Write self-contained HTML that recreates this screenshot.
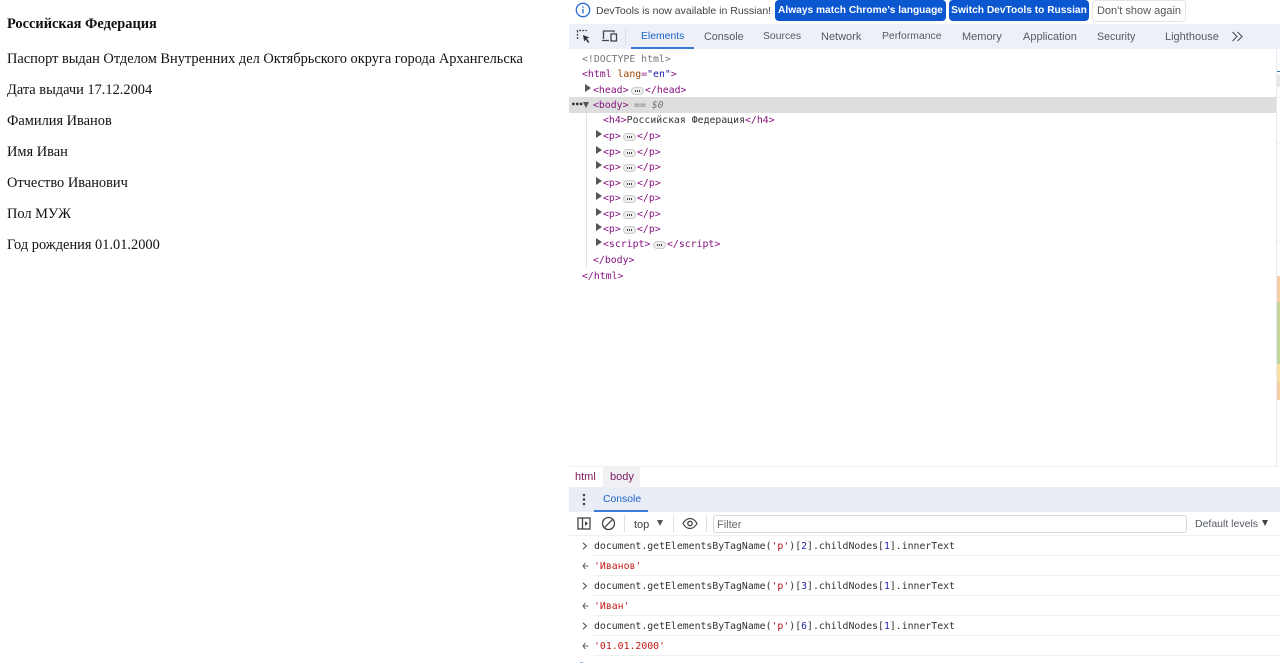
<!DOCTYPE html>
<html lang="ru"><head><meta charset="utf-8"><title>Паспорт</title>
<style>
html,body{margin:0;padding:0;background:#fff;width:1280px;height:664px;overflow:hidden}
#r{position:relative;width:1280px;height:664px;overflow:hidden}
#r>*{position:absolute}
.s{font-family:"Liberation Serif","Noto Serif CJK SC",serif;font-size:14.4px;line-height:18px;color:#111;white-space:nowrap;left:7px}
.u{font-family:"Liberation Sans","Noto Sans CJK SC",sans-serif;font-size:11px;line-height:14px;color:#555b63;white-space:nowrap}
.m{font-family:"DejaVu Sans Mono","Liberation Mono",monospace;font-size:9.83px;line-height:14px;color:#333;white-space:pre}
.t{color:#881280}.a{color:#994500}.v{color:#1a1aa6}.g{color:#777}
.b{background:#0b57d0;color:#fff;font-weight:bold;font-size:10.2px;border-radius:4px;height:21px;line-height:21px;top:0;text-align:center}
.e{width:13px;height:8px;border:1px solid #ccc;border-radius:4px;background:#eee;box-sizing:border-box}
.e:after{content:"";position:absolute;left:3px;top:2px;width:5px;height:1.5px;background:repeating-linear-gradient(90deg,#444 0 1.2px,transparent 1.2px 2px)}
.ar{width:0;height:0;border-top:4px solid transparent;border-bottom:4px solid transparent;border-left:6px solid #555}
.dn{width:0;height:0;border-left:3.5px solid transparent;border-right:3.5px solid transparent;border-top:6px solid #555}
.l{height:1px;background:#eef0f6}
</style></head><body><div id="r">
<div class="s" style="top:15px;font-weight:bold">Российская Федерация</div>
<div class="s" style="top:50px">Паспорт выдан Отделом Внутренних дел Октябрьского округа города Архангельска</div>
<div class="s" style="top:81px">Дата выдачи 17.12.2004</div>
<div class="s" style="top:112px">Фамилия Иванов</div>
<div class="s" style="top:143px">Имя Иван</div>
<div class="s" style="top:174px">Отчество Иванович</div>
<div class="s" style="top:205px">Пол МУЖ</div>
<div class="s" style="top:236px">Год рождения 01.01.2000</div>

<svg style="left:575px;top:2px" width="16" height="16" viewBox="0 0 16 16"><circle cx="8" cy="8" r="6.7" fill="none" stroke="#2a6fd6" stroke-width="1.3"/><path d="M8 7v4.4M8 4.4v1.3" stroke="#2a6fd6" stroke-width="1.4"/></svg>
<div class="u" style="left:596px;top:4px;color:#444;font-size:10.5px">DevTools is now available in Russian!</div>
<div class="u b" style="left:775px;width:171px;line-height:22px">Always match Chrome's language</div>
<div class="u b" style="left:949px;width:140px;line-height:22px">Switch DevTools to Russian</div>
<div class="u" style="left:1092px;top:0;width:92px;height:20px;line-height:21px;border:1px solid #e4e4e4;border-radius:4px;text-align:center;color:#555;background:#fff">Don't show again</div>

<div style="left:569px;top:24px;width:711px;height:25px;background:#edf0f8"></div>
<svg style="left:576px;top:29px" width="16" height="15" viewBox="0 0 16 15"><path d="M1.500 10V1.500H11" fill="none" stroke="#444" stroke-width="1.300" stroke-dasharray="2 1.300"/><path d="M7 6l6.500 2.500-2.700 1 2.500 3.500-1.300 1-2.300-3.500-1.500 2z" fill="#333"/></svg>
<svg style="left:601px;top:29px" width="17" height="14" viewBox="0 0 17 14"><path d="M2.500 10V2H13v1.500M1 11.500h7" fill="none" stroke="#444" stroke-width="1.300"/><rect x="10" y="5" width="5.500" height="7" fill="none" stroke="#444" stroke-width="1.300"/></svg>
<div style="left:625px;top:28px;width:1px;height:17px;background:#dcdfe6"></div>
<div class="u" style="left:641px;top:30px;color:#1a62c9;font-size:10.4px">Elements</div>
<div style="left:631px;top:47px;width:63px;height:2px;background:#3b78d8"></div>
<div class="u" style="left:704px;top:30px;font-size:10.8px">Console</div>
<div class="u" style="left:763px;top:30px;font-size:10.4px">Sources</div>
<div class="u" style="left:821px;top:30px">Network</div>
<div class="u" style="left:882px;top:30px;font-size:10.4px">Performance</div>
<div class="u" style="left:962px;top:30px">Memory</div>
<div class="u" style="left:1023px;top:30px">Application</div>
<div class="u" style="left:1097px;top:30px;font-size:10.6px">Security</div>
<div class="u" style="left:1165px;top:30px">Lighthouse</div>
<svg style="left:1231px;top:31px" width="13" height="11" viewBox="0 0 13 11"><path d="M1.500 1l4.500 4.500-4.500 4.500M6.500 1l4.500 4.500-4.500 4.500" fill="none" stroke="#555" stroke-width="1.200"/></svg>

<div style="left:569px;top:97px;width:707px;height:16px;background:#dedede"></div>
<div style="left:586px;top:113px;width:1px;height:155px;background:#dfe4ee"></div>

<div class="m g" style="left:582px;top:53px">&lt;!DOCTYPE html&gt;</div>
<div class="m t" style="left:582px;top:68px">&lt;html <span class="a">lang</span>=<span class="v">"en"</span>&gt;</div>
<div class="ar" style="left:585px;top:84px"></div>
<div class="m t" style="left:593px;top:84px">&lt;head&gt;</div><div class="e" style="left:631px;top:87px"></div><div class="m t" style="left:645px;top:84px">&lt;/head&gt;</div>
<div class="m" style="left:571px;top:98px;font-weight:bold;color:#333;font-size:8px;letter-spacing:-1px">•••</div>
<div class="dn" style="left:583px;top:102px"></div>
<div class="m t" style="left:593px;top:99px">&lt;body&gt;</div><div class="m g" style="left:634px;top:99px;font-style:italic">== $0</div>
<div class="m t" style="left:603px;top:114px">&lt;h4&gt;<span style="color:#333">Российская Федерация</span>&lt;/h4&gt;</div>

<div class="ar" style="left:596px;top:130px"></div><div class="m t" style="left:603px;top:130px">&lt;p&gt;</div><div class="e" style="left:623px;top:133px"></div><div class="m t" style="left:637px;top:130px">&lt;/p&gt;</div>
<div class="ar" style="left:596px;top:146px"></div><div class="m t" style="left:603px;top:146px">&lt;p&gt;</div><div class="e" style="left:623px;top:149px"></div><div class="m t" style="left:637px;top:146px">&lt;/p&gt;</div>
<div class="ar" style="left:596px;top:161px"></div><div class="m t" style="left:603px;top:161px">&lt;p&gt;</div><div class="e" style="left:623px;top:164px"></div><div class="m t" style="left:637px;top:161px">&lt;/p&gt;</div>
<div class="ar" style="left:596px;top:177px"></div><div class="m t" style="left:603px;top:177px">&lt;p&gt;</div><div class="e" style="left:623px;top:180px"></div><div class="m t" style="left:637px;top:177px">&lt;/p&gt;</div>
<div class="ar" style="left:596px;top:192px"></div><div class="m t" style="left:603px;top:192px">&lt;p&gt;</div><div class="e" style="left:623px;top:195px"></div><div class="m t" style="left:637px;top:192px">&lt;/p&gt;</div>
<div class="ar" style="left:596px;top:208px"></div><div class="m t" style="left:603px;top:208px">&lt;p&gt;</div><div class="e" style="left:623px;top:211px"></div><div class="m t" style="left:637px;top:208px">&lt;/p&gt;</div>
<div class="ar" style="left:596px;top:223px"></div><div class="m t" style="left:603px;top:223px">&lt;p&gt;</div><div class="e" style="left:623px;top:226px"></div><div class="m t" style="left:637px;top:223px">&lt;/p&gt;</div>
<div class="ar" style="left:596px;top:238px"></div><div class="m t" style="left:603px;top:238px">&lt;script&gt;</div><div class="e" style="left:653px;top:241px"></div><div class="m t" style="left:667px;top:238px">&lt;/script&gt;</div>
<div class="m t" style="left:593px;top:254px">&lt;/body&gt;</div>
<div class="m t" style="left:582px;top:270px">&lt;/html&gt;</div>

<div style="left:1276px;top:49px;width:1px;height:417px;background:#e6eaf3"></div>
<div style="left:1277px;top:71px;width:3px;height:1px;background:#3b6fc9"></div>
<div style="left:1277px;top:75px;width:3px;height:12px;background:#e8e8e8"></div>
<div class="l" style="left:1277px;top:97px;width:3px"></div>
<div class="l" style="left:1277px;top:143px;width:3px"></div>
<div class="l" style="left:1277px;top:241px;width:3px"></div>
<div style="left:1277px;top:276px;width:3px;height:26px;background:#f6cfa6"></div>
<div style="left:1277px;top:302px;width:3px;height:37px;background:#c6d49b"></div>
<div style="left:1277px;top:339px;width:3px;height:25px;background:#c4d59a"></div>
<div style="left:1277px;top:364px;width:3px;height:18px;background:#f9dfa0"></div>
<div style="left:1277px;top:382px;width:3px;height:18px;background:#f6cfa6"></div>

<div class="l" style="left:569px;top:466px;width:711px"></div>
<div style="left:603px;top:467px;width:37px;height:20px;background:#f1f1f4"></div>
<div class="u" style="left:575px;top:470px;color:#7b1a5e">html</div>
<div class="u" style="left:610px;top:470px;color:#7b1a5e">body</div>

<div style="left:569px;top:487px;width:711px;height:25px;background:#e9edf5"></div>
<svg style="left:581px;top:493px" width="6" height="13" viewBox="0 0 6 13"><circle cx="3" cy="2" r="1.300" fill="#444"/><circle cx="3" cy="6.500" r="1.300" fill="#444"/><circle cx="3" cy="11" r="1.300" fill="#444"/></svg>
<div class="u" style="left:603px;top:493px;color:#1a62c9;font-size:10.4px">Console</div>
<div style="left:594px;top:510px;width:54px;height:2px;background:#3b78d8"></div>

<svg style="left:577px;top:517px" width="14" height="13" viewBox="0 0 14 13"><rect x="1" y="1" width="12" height="11" fill="none" stroke="#444" stroke-width="1.300"/><path d="M5.500 1v11" stroke="#444" stroke-width="1.300"/><path d="M8 4l3 2.500-3 2.500z" fill="#444"/></svg>
<svg style="left:601px;top:516px" width="15" height="15" viewBox="0 0 15 15"><circle cx="7.500" cy="7.500" r="6" fill="none" stroke="#444" stroke-width="1.300"/><path d="M3.300 11.700l8.400-8.400" stroke="#444" stroke-width="1.300"/></svg>
<div style="left:624px;top:515px;width:1px;height:17px;background:#dcdfe6"></div>
<div class="u" style="left:634px;top:518px;color:#444">top</div>
<div class="dn" style="left:657px;top:520px"></div>
<div style="left:673px;top:515px;width:1px;height:17px;background:#dcdfe6"></div>
<svg style="left:682px;top:517px" width="16" height="13" viewBox="0 0 16 13"><path d="M1 6.500C3 3 5.500 1.500 8 1.500s5 1.500 7 5c-2 3.500-4.500 5-7 5s-5-1.500-7-5z" fill="none" stroke="#444" stroke-width="1.200"/><circle cx="8" cy="6.500" r="2.200" fill="none" stroke="#444" stroke-width="1.300"/></svg>
<div style="left:706px;top:515px;width:1px;height:17px;background:#dcdfe6"></div>
<div style="left:713px;top:515px;width:472px;height:16px;border:1px solid #d5d7dc;border-radius:3px;background:#fff"></div>
<div class="u" style="left:717px;top:518px;color:#666">Filter</div>
<div class="u" style="left:1195px;top:517px;font-size:10.5px">Default levels</div>
<div class="dn" style="left:1262px;top:520px;border-top-color:#444"></div>
<div class="l" style="left:569px;top:535px;width:711px"></div>

<svg style="left:582px;top:542px" width="6" height="8" viewBox="0 0 6 8"><path d="M1 .8l3.300 3.200L1 7.200" fill="none" stroke="#555" stroke-width="1.100"/></svg>
<div class="m" style="left:594px;top:540px">document.getElementsByTagName(<span style="color:#a11">'p'</span>)[<span style="color:#22a">2</span>].childNodes[<span style="color:#22a">1</span>].innerText</div>
<div class="l" style="left:594px;top:555px;width:686px"></div>
<svg style="left:582px;top:562px" width="7" height="8" viewBox="0 0 7 8"><path d="M3.500 1L1 4l2.500 3M1 4h5.500" fill="none" stroke="#666" stroke-width="1"/></svg>
<div class="m" style="left:594px;top:560px;color:#c41a16">'Иванов'</div>
<div class="l" style="left:594px;top:575px;width:686px"></div>

<svg style="left:582px;top:582px" width="6" height="8" viewBox="0 0 6 8"><path d="M1 .8l3.300 3.200L1 7.200" fill="none" stroke="#555" stroke-width="1.100"/></svg>
<div class="m" style="left:594px;top:580px">document.getElementsByTagName(<span style="color:#a11">'p'</span>)[<span style="color:#22a">3</span>].childNodes[<span style="color:#22a">1</span>].innerText</div>
<div class="l" style="left:594px;top:595px;width:686px"></div>
<svg style="left:582px;top:602px" width="7" height="8" viewBox="0 0 7 8"><path d="M3.500 1L1 4l2.500 3M1 4h5.500" fill="none" stroke="#666" stroke-width="1"/></svg>
<div class="m" style="left:594px;top:600px;color:#c41a16">'Иван'</div>
<div class="l" style="left:594px;top:615px;width:686px"></div>

<svg style="left:582px;top:622px" width="6" height="8" viewBox="0 0 6 8"><path d="M1 .8l3.300 3.200L1 7.200" fill="none" stroke="#555" stroke-width="1.100"/></svg>
<div class="m" style="left:594px;top:620px">document.getElementsByTagName(<span style="color:#a11">'p'</span>)[<span style="color:#22a">6</span>].childNodes[<span style="color:#22a">1</span>].innerText</div>
<div class="l" style="left:594px;top:635px;width:686px"></div>
<svg style="left:582px;top:642px" width="7" height="8" viewBox="0 0 7 8"><path d="M3.500 1L1 4l2.500 3M1 4h5.500" fill="none" stroke="#666" stroke-width="1"/></svg>
<div class="m" style="left:594px;top:640px;color:#c41a16">'01.01.2000'</div>
<div class="l" style="left:594px;top:655px;width:686px"></div>
<div style="left:580px;top:662px;width:3px;height:1px;background:#8fb2e8"></div>
</div></body></html>
